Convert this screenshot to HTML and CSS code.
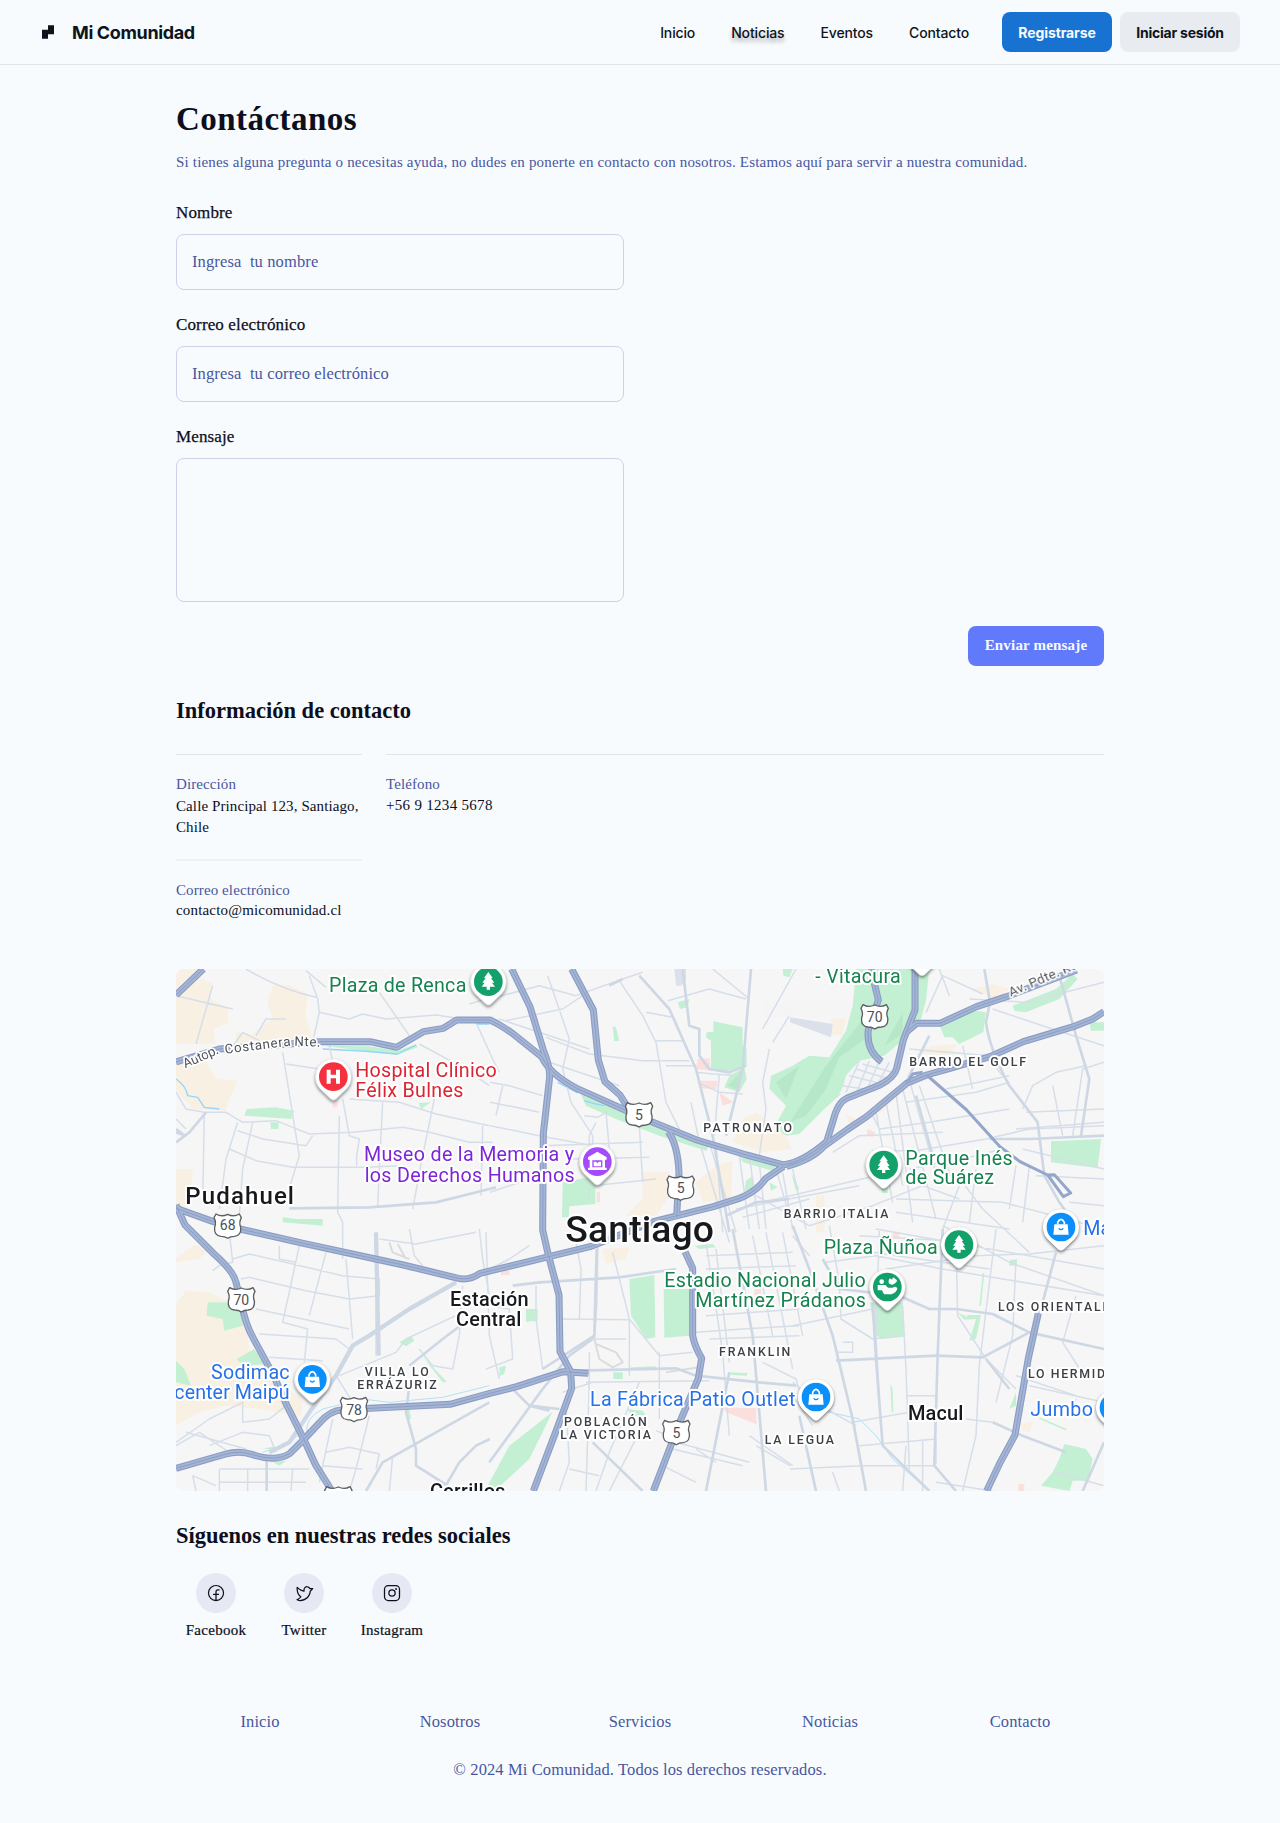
FILE: index.html
```html
<!DOCTYPE html>
<html lang="es">
<head>
<meta charset="utf-8">
<title>Mi Comunidad - Contacto</title>
<link rel="stylesheet" href="styles.css">
</head>
<body>
<header class="header">
  <div class="brand">
    <svg class="brand-mark" viewBox="0 0 48 48"><path d="M24 4H42V30.667H24V44H6V17.333H24Z" fill="currentColor"/></svg>
    <span class="brand-name">Mi Comunidad</span>
  </div>
  <nav class="nav">
    <a>Inicio</a><a class="raised">Noticias</a><a>Eventos</a><a>Contacto</a>
  </nav>
  <div class="actions">
    <button class="btn btn-primary">Registrarse</button>
    <button class="btn btn-soft">Iniciar sesión</button>
  </div>
</header>

<main class="main">
  <h1 class="title">Contáctanos</h1>
  <p class="intro">Si tienes alguna pregunta o necesitas ayuda, no dudes en ponerte en contacto con nosotros. Estamos aquí para servir a nuestra comunidad.</p>

  <form class="form">
    <label class="field"><span class="field-label">Nombre</span><input class="control" type="text" placeholder="Ingresa  tu nombre"></label>
    <label class="field"><span class="field-label">Correo electrónico</span><input class="control" type="text" placeholder="Ingresa  tu correo electrónico"></label>
    <label class="field"><span class="field-label">Mensaje</span><textarea class="control area"></textarea></label>
    <button type="button" class="send">Enviar mensaje</button>
  </form>

  <h2 class="heading">Información de contacto</h2>
  <dl class="info">
    <div class="info-item address"><dt>Dirección</dt><dd>Calle Principal 123, Santiago, Chile</dd></div>
    <div class="info-item phone"><dt>Teléfono</dt><dd>+56 9 1234 5678</dd></div>
    <div class="info-item mail"><dt>Correo electrónico</dt><dd>contacto@micomunidad.cl</dd></div>
  </dl>

  <svg class="map" viewBox="0 0 2784 1566" role="img" aria-label="Mapa de Santiago">
    <defs>
      <g id="highways">
        <path d="M0 78L82 0"/>
        <path d="M0 279L130 240 432 218H582L662 235 742 188 802 178 842 153H942Q980 170 1022 203L1097 263Q1120 315 1202 358L1347 423 1427 458 1562 513 1712 558 1822 588Q1880 580 1952 518L1972 453Q1985 400 2012 388L2112 348Q2155 325 2162 298L2182 213 2217 123V0"/>
        <path d="M1832 592Q1910 570 1942 533L2012 483 2072 443 2192 343 2252 318 2322 298 2442 263 2542 218 2692 173 2750 150 2784 128"/>
        <path d="M2190 190L2222 163H2292L2402 113 2492 83 2702 3"/>
        <path d="M2085 0L2107 93 2077 183Q2070 245 2117 278"/>
        <path d="M1007 0L1062 113 1102 243Q1125 300 1120 333L1102 493 1100 783 1117 858 1149 978 1152 1148 1184 1208 1187 1258 1147 1368 1072 1566"/>
        <path d="M1187 0L1252 123 1267 273 1287 338 1332 378 1357 418"/>
        <path d="M1477 488Q1506 530 1509 613L1502 743"/>
        <path d="M1822 593L1770 628Q1740 670 1690 688L1612 713 1432 758 1242 833 912 913Q880 935 847 928L682 888 382 823 192 780 112 758 0 718"/>
        <path d="M0 708L27 768 112 853Q172 905 180 940L197 1008Q210 1070 232 1108L292 1218 332 1308 382 1408 420 1490 468 1566"/>
        <path d="M0 1498L150 1455Q190 1444 230 1457 300 1480 342 1453L382 1413 430 1362Q460 1325 500 1322L582 1318 822 1306 942 1273 1022 1253 1162 1208 1237 1213"/>
        <path d="M1527 848L1550 898V1100Q1555 1130 1577 1168L1567 1228 1512 1358 1432 1566"/>
        <path d="M2587 1033L2557 1168 2517 1398Q2470 1480 2432 1566"/>
      </g>
      <path id="pin" d="M-41 36A54 54 0 1 1 41 36L9 67Q0 75-9 67Z"/>
      <path id="tree" d="M0-26L13-8H8L18 6H11L20 18H5V27H-5V18H-20L-11 6H-18L-8-8H-13Z"/>
      <g id="bag"><path d="M-20-8H20L23 23H-23Z"/><path class="bag-handle" d="M-10-8V-14Q0-32 10-14V-8"/><path class="bag-smile" d="M-7 4Q0 12 7 4"/></g>
      <path id="shield" d="M-35-35Q-18-25 0-34 18-25 35-35L41-24Q33-9 39 4 42 30 20 32 8 32 0 38-8 32-20 32-42 30-39 4-33-9-41-24Z"/>
    </defs>
    <rect width="2784" height="1566" fill="#f6f6f6"/>

    <!-- built-up zones -->
    <g class="sand">
      <path d="M0 0H70L60 22 110 45 100 88 155 115 158 160 115 180V225H0Z"/>
      <path d="M290 50L340 48 395 75 388 140 410 210 330 235 180 228V190L230 195 290 150 275 100Z"/>
      <path d="M0 280H90L120 330 185 335 155 400 150 425 50 420 0 365Z"/>
      <path d="M0 600L50 600 48 650 20 720H0Z"/>
      <path d="M0 1005L30 965 100 970 160 1000 210 1035 220 1140 270 1180 320 1250 380 1290 375 1340 250 1320 150 1310 70 1330 0 1370Z"/>
      <path d="M0 870L50 830 110 830 70 870 0 880Z"/>
      <path d="M1400 610H1480V680L1440 740H1350L1400 690Z"/>
      <path d="M1700 450L1740 430 1820 490 1850 540 1760 550 1670 520Z"/>
      <path d="M1620 590L1670 575 1665 690 1580 700 1560 640Z"/>
      <path d="M1280 840L1360 835 1350 870 1290 885Z"/>
      <path d="M2110 395L2170 350 2190 355 2120 425 2060 450Z"/>
      <path d="M2240 235L2340 225 2330 260 2240 255Z"/>
      <path d="M2390 60L2450 45 2500 60 2460 90Z"/>
      <path d="M1965 150L2010 145 2000 200 1965 195Z"/>
      <path d="M2535 1365L2570 1360 2560 1390 2540 1385Z"/>
      <path d="M1920 680H1945V790H1920ZM2010 435L2040 450 2025 480Z"/>
    </g>
    <g class="rose">
      <path d="M1565 270L1600 268 1605 305 1560 300ZM1565 335L1625 335 1620 360 1570 358ZM1630 370L1672 400 1640 410Z"/>
      <path d="M2075 480L2098 490 2090 505 2073 500ZM1640 1315L1740 1318 1742 1366 1650 1330ZM470 395H485V415H470ZM1262 668H1272V700H1262ZM2150 788H2170V808H2150ZM1735 960H1755V978H1735ZM2527 1545H2545V1566H2527ZM975 905H1000V918H975Z"/>
    </g>

    <!-- parks -->
    <g class="park">
      <path d="M2040 0H2260L2250 95 2235 150 2185 210 2125 260 2050 275 2010 320 1995 375 1945 420 1870 495 1830 500 1795 475 1830 410 1780 360 1785 320 1850 290 1900 260 1960 265 2010 185 2030 110Z"/>
      <path d="M1612 157L1700 175 1700 230 1712 240V290L1640 310 1605 300V215L1590 205 1592 190 1612 188Z"/>
      <path d="M1705 295L1712 330 1690 370 1645 355 1660 320Z"/>
      <path d="M1505 100L1540 90 1535 115 1512 120ZM1310 172L1320 175 1330 215 1315 217ZM1820 0H1850L1840 25 1822 20Z"/>
      <path d="M1212 370L1260 385 1340 425 1470 485 1600 530 1590 545 1450 500 1320 450 1230 410Z"/>
      <path d="M1690 560L1800 590 1790 605 1700 580ZM1710 635L1730 620 1735 655 1705 672ZM1780 640L1805 655 1785 665Z"/>
      <path d="M1160 640L1240 625 1258 650V705L1180 712 1178 745H1158Z"/>
      <path d="M2290 165L2400 125 2430 130 2422 190 2350 225 2330 205 2305 205Z"/>
      <path d="M2510 110L2640 60 2690 15 2705 30 2650 90 2550 130 2515 125Z"/>
      <path d="M2625 517L2775 510 2765 597 2625 580ZM2740 160H2784V185H2745Z"/>
      <path d="M212 420L300 415 355 425 345 450 205 440ZM283 460H308V480H285ZM320 745L360 750 440 750 440 770 320 760ZM728 402L765 400 735 420Z"/>
      <path d="M440 230L580 232 665 245 720 225 725 235 660 258 560 245Z"/>
      <path d="M95 1000L150 1000 200 1030 200 1070 145 1085 140 1050 92 1040ZM182 1170L235 1140 265 1185 200 1190ZM0 1175L25 1200 45 1250 0 1240Z"/>
      <path d="M670 1120L705 1100 715 1115 690 1132ZM735 1155L812 1238 800 1240ZM690 1320L700 1318 705 1350 695 1352ZM260 1440L295 1432 295 1440ZM285 1475L330 1475 310 1490Z"/>
      <path d="M1360 930L1435 918 1438 1105 1410 1110 1365 1040ZM1463 960H1542V1100L1465 1106Z"/>
      <path d="M1050 1020H1085V1055L1050 1058ZM970 1195L990 1190 985 1215 970 1222ZM1312 1210H1340V1230H1312ZM1365 1195L1440 1192 1430 1200H1365ZM1662 1210L1715 1212 1712 1220 1665 1218ZM1355 1320L1400 1325 1410 1340 1365 1340Z"/>
      <path d="M1130 1328L1060 1470 965 1558 935 1550 1000 1430Z"/>
      <path d="M2082 1000L2180 1000 2185 1103 2115 1110 2095 1095Z"/>
      <path d="M2345 1030L2375 1045 2372 1038 2415 1038 2400 1110 2380 1115 2400 1050 2365 1052ZM2425 912L2415 1010 2410 1010 2420 912ZM2502 872H2522V890H2500Z"/>
      <path d="M2143 1245L2150 1260 2152 1330 2147 1330ZM2500 1320L2520 1270V1310ZM2590 1345L2672 1380 2668 1384 2590 1350Z"/>
      <path d="M2665 1425L2730 1440 2750 1470 2735 1535 2690 1535 2680 1566 2595 1550 2630 1510 2650 1470Z"/>
      <path d="M1845 610L1870 660 1860 665ZM1556 830L1610 825 1620 835 1570 840ZM2115 655H2135V672H2120Z"/>
    </g>
    <g class="park-shade">
      <path d="M1842 460L1950 290 2030 190 2100 100 2120 140 2060 215 1990 265 1950 360 1890 440Z"/>
      <path d="M1800 340L1870 290 1830 390ZM2125 230L2180 130 2180 195ZM1655 350L1700 300 1690 365Z"/>
    </g>
    <path class="fade" d="M1495 0H1530V35L1515 50H1500ZM1842 145L1970 165 1965 205 1842 160Z"/>
    <path class="base" d="M1990 375L2015 320 2060 278 2120 275 2160 235V300L2110 345 2020 375Z"/>

    <!-- water -->
    <path class="water" d="M0 330Q30 350 35 380L65 385 85 415 130 420M440 240L560 246 665 255 720 228M900 165H940M1145 340L1205 372M1225 395L1260 405 1285 410"/>
    <path class="stream" d="M395 1400Q380 1350 440 1320L560 1290 640 1300 800 1285 940 1250M260 1450L330 1425 380 1390M1940 1325L2050 1350 2100 1400 2150 1470 2260 1566M1370 1200L1440 1197"/>

    <!-- railway yards -->
    <path class="rail" d="M1265 835L1262 1000 1255 1110 1270 1170 1310 1195 1340 1180 1320 1150 1260 1125M640 820L650 850 700 870M665 825L690 870M1470 1210L1570 1195"/>

    <!-- local streets -->
    <g class="street">
      <path d="M0 80L170 120M110 50L60 225M175 225L200 190 250 215M240 200L270 150H330M400 20L425 90 430 130 410 220M210 0Q310 60 420 85M430 130L520 150 560 135 630 150 780 138 860 150M610 70L700 200M390 5L450 55M730 225L860 295 940 350M800 178L860 150M880 105L930 90M900 160L950 270 970 310"/>
      <path d="M0 370L30 420 85 430 150 430 200 460 300 455 350 475 400 495 530 490 680 475 760 490 880 520 950 520M85 430L80 700M0 450L30 480M185 460L150 570 130 720M230 460L200 600 190 740M185 485L260 510 390 530 410 500M160 540L240 575 350 595 560 595 680 590M320 250L360 500 370 560 330 690M330 285L430 300M460 230L470 280M500 390L520 500 550 510 542 560V590M490 440L485 730 500 760V870M620 400L612 560 605 715M775 390L740 560 710 720M520 390L670 400 780 435 940 470M920 470L915 680"/>
      <path d="M1110 205L1240 255 1400 275 1540 275M970 150L1240 240M1120 280L1240 320 1330 350M990 155L1160 120 1220 80M942 90L1090 50 1200 80 1340 30 1400 10M1115 20L1180 210 1160 300 1185 400 1250 500V590M942 340L1000 350 1100 380M980 350L960 440M942 400L1020 415 1090 430M942 470L1090 500 1250 530M1225 440L1265 445 1290 430 1300 540M1260 460L1240 500V700M1100 530L1400 520M1190 570L1420 565M1250 650L1440 630M942 670L1090 620"/>
      <path d="M1330 35L1400 140 1440 220 1470 400 1510 480M1410 130L1490 145M1440 215H1520M1470 290H1560M1475 95L1600 60 1710 90M1610 0L1720 90M1560 310L1610 315 1700 320M1565 340L1630 370 1700 375M1630 315L1615 500M1545 400L1570 520M1390 470L1400 640M1760 180L1860 0M1790 220L1840 140M1780 240L1760 340 1770 420 1750 560"/>
      <path d="M1600 520L1680 790M1620 525L1640 790M1575 535L1660 820M1690 560L1720 780M1720 560L1750 780M1750 580L1770 780M1680 720L2050 650M1760 700L2100 620M1700 745L1900 690M1820 610L1850 780M1850 600L1890 780M1800 600L1840 740M1740 680L1900 770 2090 710 2240 650 2350 690"/>
      <path d="M2020 320L2120 345M2040 300L2140 330M2060 285L2150 310M2000 350L2100 365M2050 275L2010 370M2080 275L2040 375M2110 275L2070 370M2140 280L2100 355"/>
      <path d="M2180 360L2280 750M2205 350L2290 650M2230 350L2330 640M2160 370L2210 760M2130 400L2180 650M2100 430L2150 700M2090 440L2110 480 2260 460 2500 420M2190 400L2400 370 2500 340M2090 545L2220 545 2430 510 2560 480 2784 470M2200 600L2400 560 2480 540M1970 550L2050 500 2300 490"/>
      <path d="M2250 130L2300 20 2420 75M2380 90L2550 100 2784 40M2450 120L2600 170 2784 230M2290 0L2320 80M2360 230L2390 360M2310 360L2500 320M2200 240L2440 260M2730 290L2640 310 2570 350 2540 420M2630 350L2660 500M2440 270L2480 320M2690 500L2720 300 2784 280M2550 430L2784 420M2520 480L2784 460M2540 540L2784 600M2520 590L2500 720M2560 590L2540 760M2580 620L2784 630M2680 700L2784 710M2480 700L2784 780M2350 650L2300 780M2400 600L2380 760M2300 600L2360 640 2420 720 2560 850M2160 730L2500 780M2160 690L2480 700"/>
      <path d="M160 790L170 880 130 890 110 905M170 870L220 855 500 920 610 930V980L520 990 390 965 220 925 195 930M370 830L320 1060 395 1080 385 1180M450 850L400 1040M510 870L530 1110M310 830V870L360 880M240 1020L520 1080M250 1095L480 1110 520 1140M280 1165L440 1175M600 790V1160M610 810L720 825 900 790M860 950L850 1100 830 1200 770 1190 730 1140M490 1220L660 1150 690 1110 860 1030M700 780L715 860 740 890M910 780L920 870 940 980"/>
      <path d="M0 1420L100 1350 200 1300M0 1430L70 1390 160 1450M30 1390L210 1440M200 1280V1360L280 1350 330 1310M100 1430L200 1390 280 1400 300 1450M130 1500H400M130 1500V1566M130 1540H390M215 1500V1566M350 1500L345 1566M50 1520L60 1566M50 1520L120 1550M470 1350L440 1490 430 1540M580 1340L540 1500 520 1566M450 1450L520 1435 610 1455 600 1500M440 1490L560 1500M650 1460L640 1566M480 1220L530 1300"/>
      <path d="M942 900L1000 870 1060 830M930 790L940 1100 970 1230M942 1010L1000 1020 1010 1170 930 1200M1080 950V1050L1100 1200M1140 1050L1360 1052M1200 820L1215 900 1210 1050M1360 1050V1220M1310 850L1360 1050 1450 1160 1550 1150M1240 1110H1350M1230 1240L1600 1235M1240 1150V1230L1230 1566M1450 1150V1350M1160 1270L1250 1240M1170 1310L1180 1480 1150 1566M1180 1500L1270 1520M1390 1240L1300 1450 1260 1566M1400 1370L1300 1566M1460 1490L1560 1540M1500 1420L1720 1480M1490 1440L1700 1490M1560 1440L1620 1480M1440 1385L1500 1410"/>
      <path d="M1590 860L1850 850M1590 900L1860 890M1560 1090L1700 1080 1870 1070M1600 1110L1870 1100M1590 1040L1870 1020M1620 840L1660 1180M1590 820L1640 1150 1660 1400M1770 790L1850 1200M1730 800L1790 1100M1820 790L1880 1100M1760 1180L1860 1230 1880 1300M1850 1280L1910 1370M1720 1400L1850 1490M1740 1430L1842 1490"/>
      <path d="M2100 780L2784 900M1950 880L2100 860 2300 900 2784 980M2130 900L2400 860 2560 855 2784 830M1960 770L1990 940 1995 1050 2090 1110 2180 1100M1850 1070L2090 1020M2180 1010L2190 1200 2200 1500M2110 780L2100 1100 2110 1290M2340 800L2345 1040 2430 1170 2520 1260M2460 780L2410 1190 2400 1400 2360 1566M2520 870L2510 1100 2460 1300M2000 1120H2030V1150H1980M2190 1280H2280M2030 1360L2200 1330M2050 1430L2280 1410V1485M2190 1430L2180 1566M2240 1410L2240 1566M1842 1500L2060 1490 2280 1490M1970 1510L1990 1566M1850 1240L1950 1320 2040 1370M2370 1350L2450 1360M2520 1220L2700 1280M2560 1250L2784 1300M2700 980L2660 1120 2730 1230M2300 770L2500 880 2784 980M2640 1510L2784 1550M2700 1290L2680 1340M2280 1540L2450 1566M2050 800L2400 820M2020 840L2440 900M1850 800L1900 860"/>
    </g>

    <!-- avenues -->
    <g class="avenue">
      <path d="M1520 0L1540 170 1570 180V260L1600 300 1660 310 1710 290M1725 0L1700 300 1650 500M1390 20L1480 120 1560 300 1610 500 1660 790M1340 30L1300 50M340 718L580 715 780 700 940 660M0 520L40 490 90 430M0 490L30 500M0 480L20 495"/>
      <path d="M2425 0L2442 100 2430 160Q2440 240 2500 350L2585 460 2605 620 2650 700 2700 770M2650 20L2700 200 2740 330 2715 500M2440 510L2560 510 2784 500M2185 350L2260 200M2220 380L2270 560M1650 740L1740 700 1840 690M940 660L960 655"/>
      <path class="wide" d="M840 940L700 1020 580 1100 530 1130 480 1220 400 1330 340 1420 280 1450M600 790L608 1160"/>
      <path d="M1010 1070L880 1050 800 1110 700 1190M1010 950L1090 940 1330 925 1500 900M1262 840L1255 1100 1100 1200M940 1480L1100 1260 1180 1160 1250 1110M1010 1260L1060 1310 1120 1325M1060 1310L1150 1320M1250 1420L1400 1566M1210 1205L1500 1198 1560 1220 1750 1240 1860 1250M1660 1210L1590 1566M1670 780L1730 1100 1770 1566M800 1566L850 1480 900 1430 942 1410M570 1566L620 1480 940 1300"/>
      <path d="M1850 770L1900 900 1970 1100 2030 1350 2070 1566M1940 870L1990 960 2170 980 2260 1020 2340 1020 2450 1035 2560 1090 2784 1140M1980 1175L2280 1160 2420 1165 2560 1090M2300 780L2285 1160 2275 1490 2340 1566M2090 1000L2100 1170 2120 1430 2260 1566M2640 850L2600 1000 2580 1050M2430 1170L2500 1260M2450 1360L2540 1400 2670 1450M2784 1420L2720 1566M1870 1340L1920 1566M700 1250L690 1330 720 1440V1490L840 1566M272 1465V1566"/>
    </g>

    <use href="#highways" class="hw-edge"/>
    <use href="#highways" class="hw-body"/>
    <use href="#highways" class="hw-line"/>
    <g class="tunnel">
      <path d="M2252 318L2372 423 2472 533 2532 578 2615 618 2662 683 2684 672 2635 617 2615 618M2192 343L2210 315 2240 310"/>
    </g>

    <!-- route shields -->
    <g class="shields">
      <use href="#shield" x="155" y="770"/><use href="#shield" x="196" y="991"/><use href="#shield" x="1389" y="436"/>
      <use href="#shield" x="1514" y="656"/><use href="#shield" x="2096" y="142"/><use href="#shield" x="534" y="1320"/>
      <use href="#shield" x="1501" y="1389"/><use href="#shield" x="487" y="1588"/><use href="#shield" x="875" y="1588"/>
    </g>
    <g class="shield-no">
      <text x="155" y="784">68</text><text x="196" y="1008">70</text><text x="1389" y="453">5</text><text x="1514" y="672">5</text>
      <text x="2096" y="159">70</text><text x="534" y="1337">78</text><text x="1501" y="1406">5</text>
    </g>

    <!-- place pins -->
    <g class="pins">
      <use href="#pin" x="937" y="38"/><use href="#pin" x="472" y="323"/><use href="#pin" x="1264" y="578"/><use href="#pin" x="2123" y="588"/>
      <use href="#pin" x="2349" y="827"/><use href="#pin" x="2655" y="774"/><use href="#pin" x="2134" y="954"/><use href="#pin" x="409" y="1231"/>
      <use href="#pin" x="1920" y="1284"/><use href="#pin" x="2814" y="1316"/><use href="#pin" x="2238" y="-50"/>
    </g>
    <g class="discs">
      <circle class="c-park" cx="937" cy="38" r="43"/><circle class="c-health" cx="472" cy="323" r="43"/><circle class="c-museum" cx="1264" cy="578" r="43"/>
      <circle class="c-park" cx="2123" cy="588" r="43"/><circle class="c-park" cx="2349" cy="827" r="43"/><circle class="c-shop" cx="2655" cy="774" r="43"/>
      <circle class="c-park" cx="2134" cy="954" r="43"/><circle class="c-shop" cx="409" cy="1231" r="43"/><circle class="c-shop" cx="1920" cy="1284" r="43"/>
      <circle class="c-shop" cx="2814" cy="1316" r="43"/>
    </g>
    <g fill="#fff">
      <use href="#tree" x="937" y="35"/><use href="#tree" x="2123" y="585"/><use href="#tree" x="2349" y="824"/>
      <use href="#bag" x="2655" y="774"/><use href="#bag" x="409" y="1231"/><use href="#bag" x="1920" y="1284"/>
      <path d="M452 302H464V317H480V302H492V344H480V328H464V344H452Z"/>
      <path fill-rule="evenodd" d="M1264 548L1292 565V572H1287V596H1292V603H1236V596H1241V572H1236V565ZM1249 574V595H1279V574Z"/>
      <path d="M1253 578H1260L1264 583 1268 578H1275V592H1253Z"/>
      <circle cx="2117" cy="938" r="7"/>
      <path d="M2105 948H2128L2136 956H2150Q2160 950 2164 958 2162 972 2146 976H2124L2118 964H2105ZM2138 934Q2140 924 2148 932 2152 920 2158 930 2168 934 2158 942 2148 952 2138 942Z"/>
    </g>

    <!-- place names -->
    <g class="poi t-park">
      <text x="459" y="68" textLength="412">Plaza de Renca</text>
      <text x="1918" y="43" textLength="256">- Vitacura</text>
      <text x="2188" y="587" textLength="322">Parque Inés</text>
      <text x="2188" y="646" textLength="266">de Suárez</text>
      <text x="1943" y="856" textLength="342">Plaza Ñuñoa</text>
      <text x="1465" y="953" textLength="604">Estadio Nacional Julio</text>
      <text x="1558" y="1015" textLength="512">Martínez Prádanos</text>
    </g>
    <g class="poi t-health">
      <text x="538" y="323" textLength="424">Hospital Clínico</text>
      <text x="538" y="384" textLength="324">Félix Bulnes</text>
    </g>
    <g class="poi t-museum">
      <text x="564" y="577" textLength="630">Museo de la Memoria y</text>
      <text x="566" y="638" textLength="630">los Derechos Humanos</text>
    </g>
    <g class="poi t-shop">
      <text x="105" y="1230" textLength="236">Sodimac</text>
      <text x="-5" y="1291" textLength="346">center Maipú</text>
      <text x="1242" y="1312" textLength="616">La Fábrica Patio Outlet</text>
      <text x="2722" y="798">Mall</text>
      <text x="2563" y="1342" textLength="188">Jumbo</text>
    </g>
    <g class="town">
      <text x="28" y="704" textLength="326">Pudahuel</text>
      <text class="city" x="1168" y="820" textLength="446">Santiago</text>
      <text class="mid" x="822" y="1010" textLength="236">Estación</text>
      <text class="mid" x="840" y="1071" textLength="196">Central</text>
      <text class="mid" x="2196" y="1353" textLength="166">Macul</text>
      <text class="mid" x="762" y="1586" textLength="226">Cerrillos</text>
    </g>
    <g class="barrio">
      <text x="1582" y="488" textLength="266">PATRONATO</text>
      <text x="2200" y="292" textLength="350">BARRIO EL GOLF</text>
      <text x="1823" y="748" textLength="314">BARRIO ITALIA</text>
      <text x="2466" y="1025" textLength="362">LOS ORIENTALES</text>
      <text x="2556" y="1227" textLength="260">LO HERMIDA</text>
      <text x="566" y="1220" textLength="192">VILLA LO</text>
      <text x="544" y="1259" textLength="238">ERRÁZURIZ</text>
      <text x="1629" y="1160" textLength="214">FRANKLIN</text>
      <text x="1164" y="1372" textLength="248">POBLACIÓN</text>
      <text x="1153" y="1411" textLength="272">LA VICTORIA</text>
      <text x="1766" y="1424" textLength="208">LA LEGUA</text>
    </g>
    <g class="road-name">
      <text transform="translate(28 298) rotate(-24)" textLength="112">Autop.</text>
      <text transform="translate(148 254) rotate(-7)" textLength="198">Costanera</text>
      <text transform="translate(355 230) rotate(2)" textLength="78">Nte.</text>
      <text transform="translate(2505 84) rotate(-23)" textLength="330">Av. Pdte. Kennedy</text>
    </g>
  </svg>

  <h2 class="heading">Síguenos en nuestras redes sociales</h2>
  <div class="social">
    <a class="social-item"><span class="bubble"><svg viewBox="0 0 256 256"><path d="M128,24A104,104,0,1,0,232,128,104.11,104.11,0,0,0,128,24Zm8,191.63V152h24a8,8,0,0,0,0-16H136V112a16,16,0,0,1,16-16h16a8,8,0,0,0,0-16H152a32,32,0,0,0-32,32v24H96a8,8,0,0,0,0,16h24v63.63a88,88,0,1,1,16,0Z"/></svg></span>Facebook</a>
    <a class="social-item"><span class="bubble"><svg viewBox="0 0 256 256"><path d="M247.39,68.94A8,8,0,0,0,240,64H209.57A48.66,48.66,0,0,0,168.1,40a46.91,46.91,0,0,0-33.75,13.7A47.9,47.9,0,0,0,120,88v6.09C79.74,83.47,46.81,50.72,46.46,50.37a8,8,0,0,0-13.65,4.92c-4.31,47.79,9.57,79.77,22,98.18a110.93,110.93,0,0,0,21.88,24.2c-15.23,17.53-39.21,26.74-39.47,26.84a8,8,0,0,0-3.85,11.93c.75,1.12,3.75,5.05,11.08,8.72C53.51,229.7,65.48,232,80,232c70.67,0,129.72-54.42,135.75-124.44l29.91-29.9A8,8,0,0,0,247.39,68.94Zm-45,29.41a8,8,0,0,0-2.32,5.14C196,166.58,143.28,216,80,216c-10.56,0-18-1.4-23.22-3.08,11.51-6.25,27.56-17,37.88-32.48A8,8,0,0,0,92,169.08c-.47-.27-43.91-26.34-44-96,16,13,45.25,33.17,78.67,38.79A8,8,0,0,0,136,104V88a32,32,0,0,1,9.6-22.92A30.94,30.94,0,0,1,167.9,56c12.66.16,24.49,7.88,29.44,19.21A8,8,0,0,0,204.67,80h16Z"/></svg></span>Twitter</a>
    <a class="social-item"><span class="bubble"><svg viewBox="0 0 256 256"><path d="M128,80a48,48,0,1,0,48,48A48.05,48.05,0,0,0,128,80Zm0,80a32,32,0,1,1,32-32A32,32,0,0,1,128,160ZM176,24H80A56.06,56.06,0,0,0,24,80v96a56.06,56.06,0,0,0,56,56h96a56.06,56.06,0,0,0,56-56V80A56.06,56.06,0,0,0,176,24Zm40,152a40,40,0,0,1-40,40H80a40,40,0,0,1-40-40V80A40,40,0,0,1,80,40h96a40,40,0,0,1,40,40ZM192,76a12,12,0,1,1-12-12A12,12,0,0,1,192,76Z"/></svg></span>Instagram</a>
  </div>
</main>

<footer class="footer">
  <nav class="footer-nav"><a>Inicio</a><a>Nosotros</a><a>Servicios</a><a>Noticias</a><a>Contacto</a></nav>
  <p class="copyright">© 2024 Mi Comunidad. Todos los derechos reservados.</p>
</footer>
</body>
</html>
```
FILE: styles.css
```css
* { box-sizing: border-box; margin: 0; padding: 0; }
body {
  background: #f7fbfe;
  color: #0d0f1c;
  font-family: "Liberation Serif", serif;
}

/* header */
.header {
  display: flex;
  align-items: center;
  height: 65px;
  padding: 0 40px;
  border-bottom: 1px solid #e2e6ec;
  color: #0e141b;
  font-family: Inter, "Liberation Sans", sans-serif;
}
.brand { display: flex; align-items: center; gap: 16px; margin-right: auto; }
.brand-mark { width: 16px; height: 16px; }
.brand-name { font-size: 18px; font-weight: 700; letter-spacing: -0.36px; line-height: 23px; }
.nav { display: flex; gap: 36px; margin-right: 33px; font-size: 14px; font-weight: 500; line-height: 21px; letter-spacing: -0.14px; }
.raised { text-shadow: 0 4px 4px rgba(0, 0, 0, 0.3); }
.actions { display: flex; gap: 8px; }
.btn {
  height: 40px;
  border: 0;
  border-radius: 8px;
  font: 700 14px/21px Inter, "Liberation Sans", sans-serif;
}
.btn-primary { width: 110px; background: #1872d1; color: #f8fafc; letter-spacing: -0.1px; }
.btn-soft { width: 120px; background: #e8ecf0; color: #0e141b; letter-spacing: -0.22px; }

/* contact form */
.main { width: 928px; margin: 0 auto; padding-top: 37px; }
.title { font-size: 33px; line-height: 34px; letter-spacing: 0.45px; }
.intro { margin-top: 16px; color: #47569e; font-size: 15px; line-height: 21px; letter-spacing: 0.177px; white-space: nowrap; }
.form { display: flex; flex-direction: column; gap: 23px; margin-top: 28px; }
.field { display: flex; flex-direction: column; gap: 9px; width: 448px; }
.field-label { font-size: 17px; line-height: 24px; letter-spacing: 0.13px; -webkit-text-stroke: 0.25px; }
.control {
  display: block;
  width: 100%;
  height: 56px;
  padding: 0 15px 1px;
  border: 1px solid #ced2e9;
  border-radius: 8px;
  background: transparent;
  color: #0d0f1c;
  font: 16.5px "Liberation Serif", serif;
  letter-spacing: 0.12px;
  outline: 0;
}
.control::placeholder { color: #47569e; opacity: 1; }
.area { height: 144px; resize: none; }
.send {
  align-self: flex-end;
  width: 136px;
  height: 40px;
  margin-top: 1px;
  padding-bottom: 1px;
  border: 0;
  border-radius: 8px;
  background: #607afb;
  color: #f8f9fc;
  font: 700 15px "Liberation Serif", serif;
  letter-spacing: 0.18px;
}

/* contact details */
.heading { margin-top: 31px; font-size: 22.5px; line-height: 28px; }
.info {
  display: grid;
  grid-template-columns: 186px 1fr;
  column-gap: 24px;
  margin-top: 29px;
  font-size: 15px;
  line-height: 21px;
  letter-spacing: 0.1px;
}
.info-item { padding-top: 19px; border-top: 1px solid #e2e6ec; }
.info-item dt { color: #47569e; }
.address { padding-bottom: 21px; }
.address dd { margin-top: 1px; }
.phone dd { letter-spacing: 0.3px; }
.mail { border-top: 2px solid #edf0f4; }
.mail dd { margin-top: -1px; letter-spacing: 0.17px; }

/* map */
.map { display: block; width: 928px; height: 522px; margin-top: 48px; border-radius: 8px; overflow: hidden; }
.map path, .map use { stroke-linejoin: round; }
.sand { fill: #f8f0e2; }
.rose { fill: #fbdfdd; }
.park { fill: #c3f0d3; }
.park-shade { fill: #b0e2c4; opacity: 0.6; }
.fade { fill: #dbe1eb; }
.base { fill: #f2f4f6; }
.water { fill: none; stroke: #93d5fb; stroke-width: 4; }
.stream { fill: none; stroke: #b7dff7; stroke-width: 3; }
.rail { fill: none; stroke: #dadcdf; stroke-width: 6; }
.street { fill: none; stroke: #d6dee9; stroke-width: 4.5; }
.avenue { fill: none; stroke: #ced8e4; stroke-width: 8; }
.avenue .wide { stroke-width: 13; }
.hw-edge { fill: none; stroke: #8b9dc3; stroke-width: 21; }
.hw-body { fill: none; stroke: #a4b5d6; stroke-width: 14; }
.hw-line { fill: none; stroke: #8b9dc3; stroke-width: 3; }
.tunnel { fill: none; stroke: #94a6c9; stroke-width: 9; }
.shields { fill: #fff; stroke: #5c6064; stroke-width: 4; }
.map text { font-family: Roboto, "Liberation Sans", sans-serif; paint-order: stroke; stroke: #fff; stroke-linejoin: round; }
.shield-no text { fill: #4b4f54; font-size: 42px; text-anchor: middle; stroke: none; }
.pins { fill: #fff; filter: drop-shadow(0 5px 4px rgba(60, 64, 67, 0.7)); }
.c-park { fill: #14a06b; }
.c-health { fill: #f5303f; }
.c-museum { fill: #a54bfa; }
.c-shop { fill: #0a8ffb; }
.bag-handle { fill: none; stroke: #fff; stroke-width: 5; }
.bag-smile { fill: none; stroke: #0a8ffb; stroke-width: 4; }
.poi text { font-size: 59px; stroke-width: 12px; }
.t-park { fill: #16834f; }
.t-health { fill: #dc2433; }
.t-museum { fill: #7d26d9; }
.t-shop { fill: #2670e8; }
.town text { fill: #17191c; font-size: 72px; font-weight: 500; stroke-width: 12px; }
.town .city { font-size: 112px; }
.town .mid { font-size: 60px; }
.barrio text { fill: #3d4045; font-size: 37px; font-weight: 500; stroke-width: 12px; }
.road-name text { fill: #4e5257; font-size: 40px; stroke-width: 10px; }

/* social */
.social { display: flex; gap: 8px; margin-top: 23px; }
.social-item {
  display: flex;
  flex-direction: column;
  align-items: center;
  gap: 7px;
  width: 80px;
  font-size: 15px;
  line-height: 21px;
  letter-spacing: 0.3px;
  -webkit-text-stroke: 0.2px;
}
.bubble { display: grid; place-items: center; width: 40px; height: 40px; border-radius: 50%; background: #e6e9f4; }
.bubble svg { width: 20px; height: 20px; fill: currentColor; }

/* footer */
.footer { margin-top: 69px; padding-bottom: 40px; color: #47569e; font-size: 16.5px; line-height: 24px; letter-spacing: 0.12px; text-align: center; }
.footer-nav { display: grid; grid-template-columns: repeat(5, 190px); justify-content: center; }
.copyright { margin-top: 24px; }
```
